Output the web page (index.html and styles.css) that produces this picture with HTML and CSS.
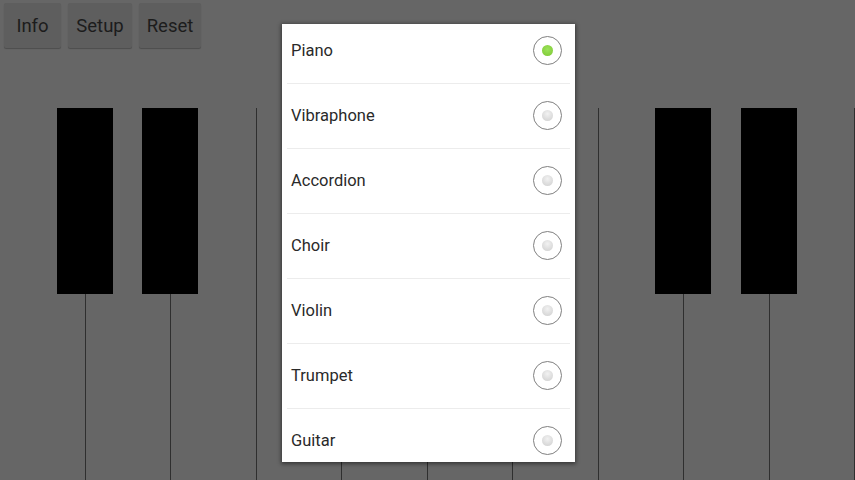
FILE: index.html
```html
<!DOCTYPE html>
<html>
<head>
<meta charset="utf-8">
<link rel="stylesheet" href="styles.css">
</head>
<body>
<div class="app">
  <div class="toolbar">
    <button class="btn">Info</button>
    <button class="btn">Setup</button>
    <button class="btn">Reset</button>
  </div>
  <div class="keyboard">
    <div class="white"></div><div class="white"></div><div class="white"></div><div class="white"></div><div class="white"></div>
    <div class="white"></div><div class="white"></div><div class="white"></div><div class="white"></div><div class="white"></div>
    <div class="black k1"></div>
    <div class="black k2"></div>
    <div class="black k4"></div>
    <div class="black k5"></div>
    <div class="black k6"></div>
    <div class="black k8"></div>
    <div class="black k9"></div>
  </div>
  <div class="dialog">
    <ul class="list">
      <li class="item"><span class="label">Piano</span><span class="radio checked"><span class="dot"></span></span></li>
      <li class="item"><span class="label">Vibraphone</span><span class="radio"><span class="dot"></span></span></li>
      <li class="item"><span class="label">Accordion</span><span class="radio"><span class="dot"></span></span></li>
      <li class="item"><span class="label">Choir</span><span class="radio"><span class="dot"></span></span></li>
      <li class="item"><span class="label">Violin</span><span class="radio"><span class="dot"></span></span></li>
      <li class="item"><span class="label">Trumpet</span><span class="radio"><span class="dot"></span></span></li>
      <li class="item"><span class="label">Guitar</span><span class="radio"><span class="dot"></span></span></li>
    </ul>
  </div>
</div>
</body>
</html>
```

FILE: styles.css
```css
* { box-sizing: border-box; }
html, body { margin: 0; padding: 0; }
body {
  width: 855px;
  height: 480px;
  overflow: hidden;
  background: #666666;
  font-family: Roboto, "Noto Sans", sans-serif;
}
.app {
  position: relative;
  width: 855px;
  height: 480px;
  display: flex;
  flex-direction: column;
}
.toolbar {
  height: 108px;
  flex: none;
  display: flex;
  align-items: flex-start;
  gap: 7px;
  padding: 3px 0 0 4px;
}
.btn {
  height: 45px;
  padding: 0;
  border: none;
  border-radius: 2px;
  background: #5e5e5e;
  box-shadow: 0 1px 1px rgba(0,0,0,0.25);
  color: #1c1c1c;
  font-family: Roboto, "Noto Sans", sans-serif;
  font-size: 18.5px;
  line-height: 45px;
  padding-top: 1px;
}
.btn:nth-child(1) { width: 57px; }
.btn:nth-child(2) { width: 64px; }
.btn:nth-child(3) { width: 62px; }
.keyboard {
  position: relative;
  flex: 1;
  display: grid;
  grid-template-columns: repeat(10, 1fr);
}
.white {
  border-right: 1px solid #2f2f2f;
}
.black {
  position: absolute;
  top: 0;
  width: 56px;
  height: 186px;
  background: #000;
}
.k1 { left: calc(10% - 29px); }
.k2 { left: calc(20% - 29px); }
.k4 { left: calc(40% - 29px); }
.k5 { left: calc(50% - 29px); }
.k6 { left: calc(60% - 29px); }
.k8 { left: calc(80% - 29px); }
.k9 { left: calc(90% - 29px); }
.dialog {
  position: absolute;
  left: 282px;
  top: 24px;
  width: 293px;
  height: 438px;
  background: #fff;
  overflow: hidden;
  box-shadow: 0 1px 4px 1px rgba(0,0,0,0.45);
}
.list {
  list-style: none;
  margin: -6px 0 0 0;
  padding: 0;
}
.item {
  height: 65px;
  display: flex;
  align-items: center;
  justify-content: space-between;
  padding: 0 13px 0 9px;
  position: relative;
}
.item + .item::before {
  content: "";
  position: absolute;
  top: 0;
  left: 5px;
  right: 5px;
  height: 1px;
  background: #ececec;
}
.label {
  font-size: 16.5px;
  color: #2a2a2a;
}
.radio {
  width: 29px;
  height: 29px;
  border-radius: 50%;
  border: 1.5px solid #808080;
  display: flex;
  align-items: center;
  justify-content: center;
}
.dot {
  width: 11px;
  height: 11px;
  border-radius: 50%;
  background: radial-gradient(circle at 50% 35%, #f2f2f2 0%, #dcdcdc 60%, #cfcfcf 100%);
}
.radio.checked .dot {
  background: radial-gradient(circle at 50% 40%, #9be35a 0%, #86cf3e 70%, #78bd34 100%);
}
```
